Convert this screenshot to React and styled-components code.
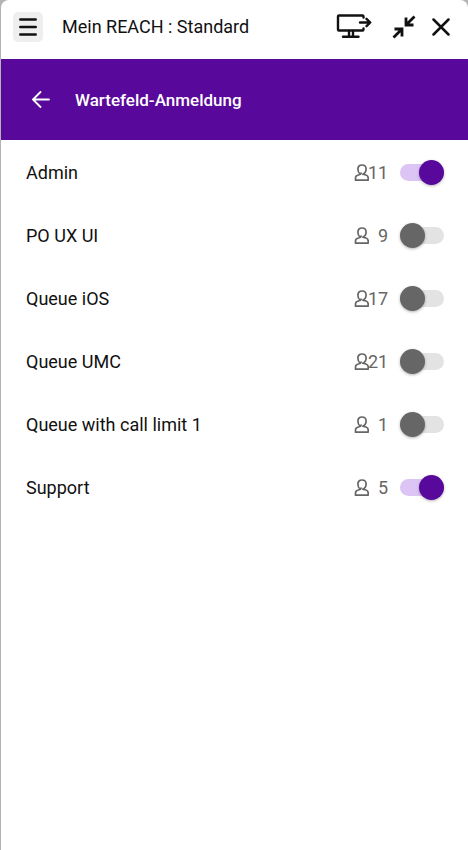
import React, { useState } from "react";
import styled, { createGlobalStyle } from "styled-components";

const GlobalStyle = createGlobalStyle`
  * {
    box-sizing: border-box;
  }
  body {
    margin: 0;
    background: #b4b4b4;
    font-family: Roboto, "Liberation Sans", sans-serif;
    font-size: 18px;
    line-height: 24px;
    color: #111;
  }
`;

const Window = styled.div`
  min-height: 100vh;
  margin-left: 1px;
  background: #fff;
  border-radius: 8px 8px 0 0;
`;

const TitleBar = styled.header`
  display: flex;
  align-items: center;
  height: 59px;
  padding: 0 16px 5px 12px;
`;

const Title = styled.h1`
  flex: 1;
  margin: 0 0 0 19px;
  font-size: 18px;
  font-weight: 400;
`;

const IconButton = styled.button`
  display: flex;
  align-items: center;
  justify-content: center;
  width: ${({ $width }) => $width || 30}px;
  height: 30px;
  padding: 0;
  border: 0;
  border-radius: 5px;
  background: ${({ $filled }) => ($filled ? "#eee" : "transparent")};
  color: inherit;
  cursor: pointer;
`;

const WindowActions = styled.div`
  display: flex;
  align-items: center;
  gap: 12px;
`;

const SectionBar = styled.div`
  display: flex;
  align-items: center;
  gap: 19px;
  height: 81px;
  padding: 0 25px;
  background: #58089b;
  color: #fff;
`;

const SectionTitle = styled.h2`
  margin: 0;
  font-size: 17px;
  font-weight: 500;
`;

const QueueList = styled.ul`
  margin: 0;
  padding: 1px 24px 0 25px;
  list-style: none;
`;

const QueueRow = styled.li`
  display: flex;
  align-items: center;
  height: 63px;
`;

const QueueName = styled.label`
  flex: 1;
`;

const Members = styled.span`
  display: flex;
  align-items: center;
  justify-content: space-between;
  width: 34px;
  margin-right: 12px;
  color: #666;
`;

const Switch = styled.input`
  appearance: none;
  display: flex;
  align-items: center;
  justify-content: ${({ checked }) => (checked ? "flex-end" : "flex-start")};
  width: 44px;
  height: 17px;
  margin: 0;
  border-radius: 9px;
  background: ${({ checked }) => (checked ? "#dcc5f5" : "#e3e3e3")};
  cursor: pointer;

  &::before {
    content: "";
    flex: none;
    width: 25px;
    height: 25px;
    border-radius: 50%;
    background: ${({ checked }) => (checked ? "#58089b" : "#666")};
    box-shadow: 0 1px 3px rgba(0, 0, 0, 0.3);
  }
`;

const MenuIcon = () => (
  <svg width="18" height="18" fill="none" stroke="currentColor" strokeWidth="2.5" strokeLinecap="round">
    <path d="M1.3 1.5h15.4M1.3 9h15.4M1.3 16.5h15.4" />
  </svg>
);

const ScreenIcon = () => (
  <svg width="40" height="26" fill="none" stroke="currentColor" strokeWidth="2.4" strokeLinejoin="round" strokeLinecap="round">
    <path d="M27.5 3.5V2.5Q27.500 1.500 26.500 1.500H3Q2 1.500 2 2.500V15.500Q2 16.500 3 16.500H26.500Q27.500 16.500 27.500 15.500V14.500" />
    <path d="M13 17v5.500M17 17v5.500M7 22.800h15.500M24 8.500h10M30.500 4.800l3.800 3.700-3.800 3.700" />
  </svg>
);

const ShrinkIcon = () => (
  <svg width="24" height="24" fill="none" stroke="currentColor" strokeWidth="2.8">
    <path d="M22.5 1.5l-8 8M14 2.5v7.5h7.5M1.5 22.5l8-8M2.5 14h7.5v7.5" />
  </svg>
);

const CloseIcon = () => (
  <svg width="18" height="18" fill="none" stroke="currentColor" strokeWidth="2.5" strokeLinecap="round">
    <path d="M1.5 1.5l15 15M16.5 1.5l-15 15" />
  </svg>
);

const BackIcon = () => (
  <svg width="18" height="18" fill="none" stroke="currentColor" strokeWidth="1.8" strokeLinecap="round" strokeLinejoin="round">
    <path d="M17 8.5H1.2M8.5 1L1 8.500l7.500 7.500" />
  </svg>
);

const MemberIcon = styled.svg`
  flex: none;
  margin-right: -1px;
`;

const PersonIcon = () => (
  <MemberIcon width="15" height="18" viewBox="0 0 15 18" fill="none" stroke="currentColor" strokeWidth="1.7" strokeLinejoin="round">
    <path d="M6 10C4.600 9 3.900 7.200 3.900 5 3.900 2.600 5.500 1 8 1S12.100 2.600 12.100 5C12.100 7.500 10.500 9.500 8.700 10.200L12 11Q14.200 11.700 14.200 14V16.200H1.500V14Q1.500 11.500 4.500 11Q6.700 10.800 7.500 8.500" />
  </MemberIcon>
);

const initialQueues = [
  { id: "admin", name: "Admin", members: 11, active: true },
  { id: "po", name: "PO UX UI", members: 9, active: false },
  { id: "ios", name: "Queue iOS", members: 17, active: false },
  { id: "umc", name: "Queue UMC", members: 21, active: false },
  { id: "limit", name: "Queue with call limit 1", members: 1, active: false },
  { id: "support", name: "Support", members: 5, active: true },
];

const App = () => {
  const [queues, setQueues] = useState(initialQueues);

  const toggleQueue = (id) => {
    setQueues(
      queues.map((queue) =>
        queue.id === id ? { ...queue, active: !queue.active } : queue
      )
    );
  };

  return (
    <>
      <GlobalStyle />
      <Window>
        <TitleBar>
          <IconButton $filled aria-label="Menü">
            <MenuIcon />
          </IconButton>
          <Title>Mein REACH : Standard</Title>
          <WindowActions>
            <IconButton $width={44} aria-label="Bildschirm teilen">
              <ScreenIcon />
            </IconButton>
            <IconButton $width={28} aria-label="Verkleinern">
              <ShrinkIcon />
            </IconButton>
            <IconButton $width={22} aria-label="Schließen">
              <CloseIcon />
            </IconButton>
          </WindowActions>
        </TitleBar>
        <SectionBar>
          <IconButton aria-label="Zurück">
            <BackIcon />
          </IconButton>
          <SectionTitle>Wartefeld-Anmeldung</SectionTitle>
        </SectionBar>
        <QueueList>
          {queues.map(({ id, name, members, active }) => (
            <QueueRow key={id}>
              <QueueName htmlFor={id}>{name}</QueueName>
              <Members>
                <PersonIcon />
                {members}
              </Members>
              <Switch
                id={id}
                type="checkbox"
                role="switch"
                checked={active}
                onChange={() => toggleQueue(id)}
              />
            </QueueRow>
          ))}
        </QueueList>
      </Window>
    </>
  );
};

export default App;
